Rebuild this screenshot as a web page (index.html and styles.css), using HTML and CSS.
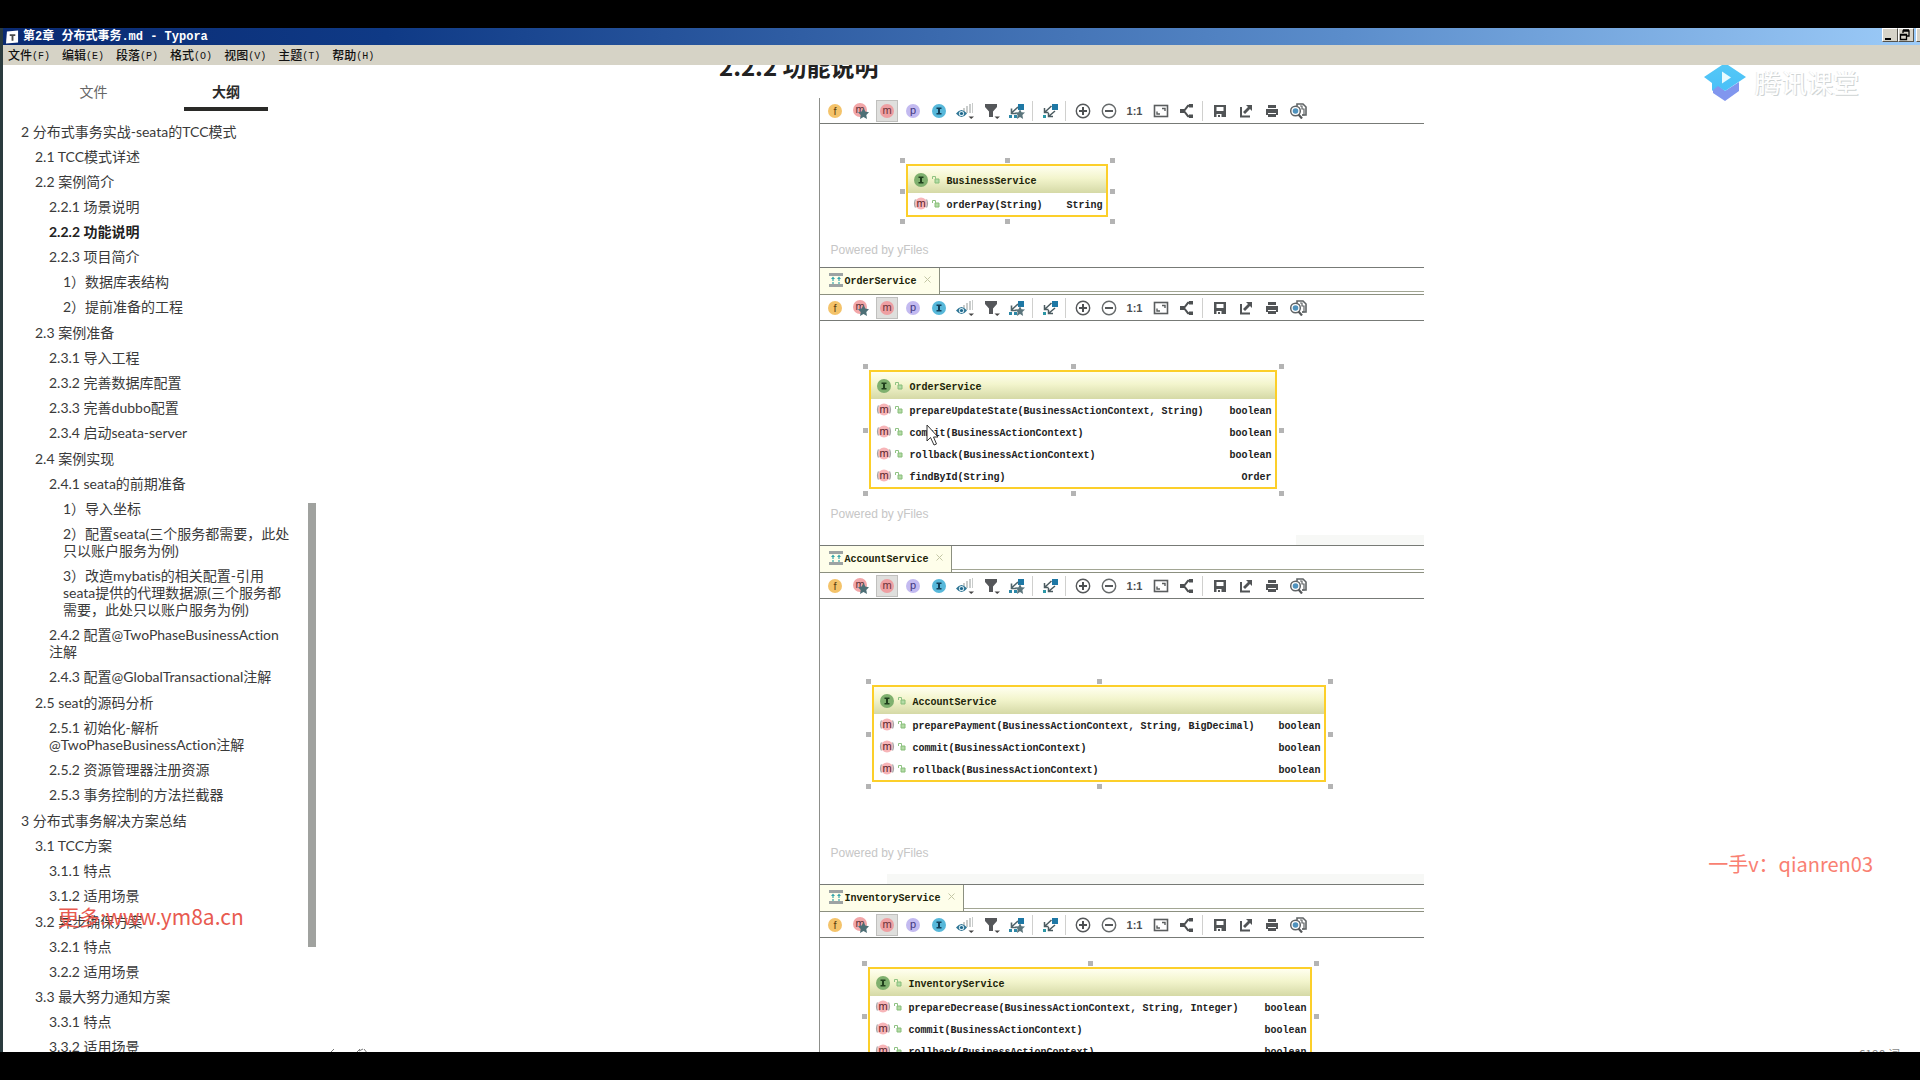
FILE: index.html
```html
<!DOCTYPE html>
<html lang="zh-CN">
<head>
<meta charset="utf-8">
<title>第2章 分布式事务.md - Typora</title>
<link rel="stylesheet" href="styles.css">
<script src="diagrams.js" defer></script>
</head>
<body>
<svg class="defs" aria-hidden="true">
  <defs>
    <linearGradient id="hat" x1="0" y1="0" x2="0" y2="1"><stop offset="0" stop-color="#55c8f6"/><stop offset="1" stop-color="#4ac0f8"/></linearGradient>
  </defs>
  <symbol id="i-field" viewBox="0 0 16 16"><circle cx="8" cy="8" r="7" fill="#f4c36a"/><text x="8" y="12" text-anchor="middle" class="glyph" fill="#5e4210">f</text></symbol>
  <symbol id="i-ctor" viewBox="0 0 16 16"><circle cx="7" cy="7" r="7" fill="#f2a6a8"/><text x="7" y="10" text-anchor="middle" class="glyph" fill="#5b2f35">m</text><path d="M10.500 5l1.800 3.600 3.700.6-2.700 2.700.7 4.100-3.500-1.900L7 16l.7-4.100L5 9.200l3.700-.6z" fill="#4d6f76"/></symbol>
  <symbol id="i-method" viewBox="0 0 16 16"><circle cx="8" cy="8" r="7" fill="#ee9fa2"/><text x="8" y="11" text-anchor="middle" class="glyph" fill="#6b3239">m</text></symbol>
  <symbol id="i-prop" viewBox="0 0 16 16"><circle cx="8" cy="8" r="7" fill="#c3baf0"/><text x="8" y="11" text-anchor="middle" class="glyph" fill="#42367e">p</text></symbol>
  <symbol id="i-inner" viewBox="0 0 16 16"><circle cx="8" cy="8" r="7" fill="#57b8da"/><path d="M5.500 4.500h5v1.500H9v4h1.500v1.500h-5V10H7V6H5.500z" fill="#123f58"/></symbol>
  <symbol id="i-eye" viewBox="0 0 18 16"><path d="M7 5h2v3H7zM10 3h2v7h-2zM13 1h2v9h-2zM16 0h1v10h-1z" fill="#c9cccb"/><path d="M0 10.500Q5.500 3.500 11 10.500Q5.500 17.500 0 10.500z" fill="#2f7595"/><circle cx="5.500" cy="10.500" r="2.600" fill="#d9edf4"/><circle cx="5.500" cy="10.500" r="1.600" fill="#1d668c"/><path d="M12.500 13.500H18L15.200 16z" fill="#444"/></symbol>
  <symbol id="i-filter" viewBox="0 0 18 16"><path d="M3 1h12v3l-4 4.500V14H7V8.500L3 4z" fill="#55575a"/><path d="M12.500 13.500H18L15.200 16z" fill="#444"/></symbol>
  <symbol id="i-deps" viewBox="0 0 16 16"><path d="M9 1h6v6H9z" fill="#1e78a5"/><path d="M0 12h3v3H0zM5 12h3v3H5z" fill="#2c87a6"/><path d="M9 4L3 9.500M2.500 5.500v5h5" fill="none" stroke="#51646a" stroke-width="1.600"/><path d="M11 6l1.500 3.200 3.500.4-2.600 2.400.7 4-3.100-1.900L7.900 16l.7-4L6 9.600l3.500-.4z" fill="#5b757c"/></symbol>
  <symbol id="i-link" viewBox="0 0 16 16"><path d="M10 1h6v6h-6z" fill="#1e78a5"/><path d="M1 12h3v3H1z" fill="#2c97a6"/><path d="M9.500 3L3 9M2.500 5v4.500h4M13 8l-6.500 5.500M11 13.500H6.500V10" fill="none" stroke="#4b5b60" stroke-width="1.500"/></symbol>
  <symbol id="i-plus" viewBox="0 0 16 16"><circle cx="8" cy="8" r="6.700" fill="none" stroke="#55585a" stroke-width="1.400"/><path d="M4 8h8M8 4v8" stroke="#4d5052" stroke-width="2"/></symbol>
  <symbol id="i-minus" viewBox="0 0 16 16"><circle cx="8" cy="8" r="6.700" fill="none" stroke="#666a6b" stroke-width="1.400"/><path d="M4 8h8" stroke="#55585a" stroke-width="2"/></symbol>
  <symbol id="i-fit" viewBox="0 0 16 16"><rect x="1.500" y="2.500" width="13" height="11" fill="none" stroke="#5a5d5e" stroke-width="1.600"/><path d="M9 5.500h3V8M4 8.500V11h3" fill="none" stroke="#5a5d5e" stroke-width="1.400"/></symbol>
  <symbol id="i-layout" viewBox="0 0 16 16"><path d="M1 6h5v4H1zM10 1h4v3.500h-4zM10 11.500h4V15h-4z" fill="#4d5052"/><path d="M11 2.800H9L5 8l4 5.200h2" fill="none" stroke="#4d5052" stroke-width="2"/></symbol>
  <symbol id="i-save" viewBox="0 0 16 16"><path d="M2 2h12v12H2z" fill="#515456"/><path d="M4.500 4h7v4h-7z" fill="#fff"/><path d="M4.500 11h5v3h-5z" fill="#fff"/><path d="M6 12h2v2H6z" fill="#515456"/></symbol>
  <symbol id="i-export" viewBox="0 0 16 16"><path d="M8 2h6v6l-2-2-5 5-2-2 5-5z" fill="#515456"/><path d="M3 4v9.500h9" fill="none" stroke="#515456" stroke-width="2"/></symbol>
  <symbol id="i-print" viewBox="0 0 16 16"><path d="M4 2h8v3H4zM2 6h12v6h-2v-2H4v2H2zM4 11h8v3H4z" fill="#515456"/></symbol>
  <symbol id="i-preview" viewBox="0 0 18 16"><path d="M8 3V1h6l3 3v8h-4" fill="none" stroke="#606466" stroke-width="1.600"/><path d="M11 3h2v3h2v6h-2" fill="none" stroke="#606466" stroke-width="1.200"/><circle cx="6.500" cy="8" r="4.800" fill="#fff" stroke="#606466" stroke-width="1.500"/><circle cx="6.500" cy="8" r="2.800" fill="#4f92bd"/><path d="M9.500 11.500l3.500 4" stroke="#55585a" stroke-width="2.200"/></symbol>
  <symbol id="i-iface" viewBox="0 0 16 16"><circle cx="8" cy="8" r="7" fill="#7fb06e"/><path d="M5.500 4.500h5V6H9v4h1.500v1.500h-5V10H7V6H5.500z" fill="#20401c"/></symbol>
  <symbol id="i-abs" viewBox="0 0 16 16"><circle cx="8" cy="7.500" r="6" fill="#f7b5b8"/><path d="M2.500 3.500Q.5 7.500 2.500 11.500M13.500 3.500Q15.500 7.500 13.500 11.500" fill="none" stroke="#a5a5a5" stroke-width="1.200"/><text x="8" y="11" text-anchor="middle" class="glyph" fill="#5a2228">m</text></symbol>
  <symbol id="i-lock" viewBox="0 0 10 10"><path d="M4 4h4v4H4z" fill="#b4dba6" stroke="#86bd79"/><path d="M1.500 4V1.500h3V4" fill="none" stroke="#8fc283"/></symbol>
  <symbol id="i-diagram" viewBox="0 0 14 14"><path d="M0 0h14v3H0zM0 11h14v3H0z" fill="#9da3a3"/><path d="M4 11V5M10 11V5" stroke="#35a5ab" stroke-width="1.200" stroke-dasharray="2 1"/><path d="M2 6l2-2.500L6 6zM8 6l2-2.500L12 6z" fill="#35a5ab"/></symbol>
</svg>

<template id="toolbar-template">
  <div class="toolbar" role="toolbar" aria-label="图表工具">
    <button class="tool" type="button" aria-label="Fields"><svg class="ico"><use href="#i-field"/></svg></button>
    <button class="tool" type="button" aria-label="Constructors"><svg class="ico"><use href="#i-ctor"/></svg></button>
    <button class="tool tool-on" type="button" aria-label="Methods" aria-pressed="true"><svg class="ico"><use href="#i-method"/></svg></button>
    <button class="tool" type="button" aria-label="Properties"><svg class="ico"><use href="#i-prop"/></svg></button>
    <button class="tool" type="button" aria-label="Inner classes"><svg class="ico"><use href="#i-inner"/></svg></button>
    <button class="tool" type="button" aria-label="Visibility"><svg class="ico ico-wide"><use href="#i-eye"/></svg></button>
    <button class="tool" type="button" aria-label="Filter"><svg class="ico ico-wide"><use href="#i-filter"/></svg></button>
    <button class="tool" type="button" aria-label="Dependencies"><svg class="ico"><use href="#i-deps"/></svg></button>
    <span class="sep"></span>
    <button class="tool" type="button" aria-label="Edges"><svg class="ico"><use href="#i-link"/></svg></button>
    <span class="sep"></span>
    <button class="tool" type="button" aria-label="Zoom in"><svg class="ico"><use href="#i-plus"/></svg></button>
    <button class="tool" type="button" aria-label="Zoom out"><svg class="ico"><use href="#i-minus"/></svg></button>
    <button class="tool tool-text" type="button">1:1</button>
    <button class="tool" type="button" aria-label="Fit content"><svg class="ico"><use href="#i-fit"/></svg></button>
    <button class="tool" type="button" aria-label="Layout"><svg class="ico"><use href="#i-layout"/></svg></button>
    <span class="sep"></span>
    <button class="tool" type="button" aria-label="Save"><svg class="ico"><use href="#i-save"/></svg></button>
    <button class="tool" type="button" aria-label="Export"><svg class="ico"><use href="#i-export"/></svg></button>
    <button class="tool" type="button" aria-label="Print"><svg class="ico"><use href="#i-print"/></svg></button>
    <button class="tool" type="button" aria-label="Print preview"><svg class="ico ico-wide"><use href="#i-preview"/></svg></button>
  </div>
</template>

<div class="window">
  <header class="titlebar">
    <svg class="app-icon" viewBox="0 0 14 14"><path d="M1 1l12-1v13l-13 1z" fill="#fff"/><path d="M4 4h6v2H8v5H6V6H4z" fill="#4a4a4a"/></svg>
    <span class="title">第2章 分布式事务.md - Typora</span>
    <div class="win-buttons">
      <button class="win-btn" type="button" aria-label="最小化"><svg viewBox="0 0 12 12"><path d="M2 9h6v2H2z" fill="#000"/></svg></button>
      <button class="win-btn" type="button" aria-label="还原"><svg viewBox="0 0 12 12"><path d="M4 4V2h6v5H8M4 1h6M1.500 5.500h6v5h-6zM1.500 6h6" fill="none" stroke="#000" stroke-width="1.300"/></svg></button>
      <button class="win-btn win-close" type="button" aria-label="关闭"></button>
    </div>
  </header>
  <nav class="menubar">
    <button type="button">文件<span>(F)</span></button>
    <button type="button">编辑<span>(E)</span></button>
    <button type="button">段落<span>(P)</span></button>
    <button type="button">格式<span>(O)</span></button>
    <button type="button">视图<span>(V)</span></button>
    <button type="button">主题<span>(T)</span></button>
    <button type="button">帮助<span>(H)</span></button>
  </nav>

  <div class="workspace">
    <aside class="sidebar">
      <div class="tabs" role="tablist">
        <button class="tab" type="button" role="tab">文件</button>
        <button class="tab tab-active" type="button" role="tab" aria-selected="true">大纲</button>
      </div>
      <ul class="outline">
        <li><a href="#">2 分布式事务实战-seata的TCC模式</a>
          <ul>
            <li><a href="#">2.1 TCC模式详述</a></li>
            <li><a href="#">2.2 案例简介</a>
              <ul class="sections">
                <li><a href="#">2.2.1 场景说明</a></li>
                <li><a class="current" href="#">2.2.2 功能说明</a></li>
                <li><a href="#">2.2.3 项目简介</a>
                  <ul>
                    <li><a href="#">1）数据库表结构</a></li>
                    <li><a href="#">2）提前准备的工程</a></li>
                  </ul></li>
              </ul></li>
            <li><a href="#">2.3 案例准备</a>
              <ul class="sections">
                <li><a href="#">2.3.1 导入工程</a></li>
                <li><a href="#">2.3.2 完善数据库配置</a></li>
                <li><a href="#">2.3.3 完善dubbo配置</a></li>
                <li><a href="#">2.3.4 启动seata-server</a></li>
              </ul></li>
            <li><a href="#">2.4 案例实现</a>
              <ul class="sections">
                <li><a href="#">2.4.1 seata的前期准备</a>
                  <ul>
                    <li><a href="#">1）导入坐标</a></li>
                    <li><a href="#">2）配置seata(三个服务都需要，此处只以账户服务为例)</a></li>
                    <li><a href="#">3）改造mybatis的相关配置-引用seata提供的代理数据源(三个服务都需要，此处只以账户服务为例)</a></li>
                  </ul></li>
                <li><a href="#">2.4.2 配置@TwoPhaseBusinessAction注解</a></li>
                <li><a href="#">2.4.3 配置@GlobalTransactional注解</a></li>
              </ul></li>
            <li><a href="#">2.5 seat的源码分析</a>
              <ul class="sections">
                <li><a href="#">2.5.1 初始化-解析@TwoPhaseBusinessAction注解</a></li>
                <li><a href="#">2.5.2 资源管理器注册资源</a></li>
                <li><a href="#">2.5.3 事务控制的方法拦截器</a></li>
              </ul></li>
          </ul></li>
        <li><a href="#">3 分布式事务解决方案总结</a>
          <ul>
            <li><a href="#">3.1 TCC方案</a>
              <ul class="sections">
                <li><a href="#">3.1.1 特点</a></li>
                <li><a href="#">3.1.2 适用场景</a></li>
              </ul></li>
            <li><a href="#">3.2 异步确保方案</a>
              <ul>
                <li><a href="#">3.2.1 特点</a></li>
                <li><a href="#">3.2.2 适用场景</a></li>
              </ul></li>
            <li><a href="#">3.3 最大努力通知方案</a>
              <ul>
                <li><a href="#">3.3.1 特点</a></li>
                <li><a href="#">3.3.2 适用场景</a></li>
              </ul></li>
          </ul></li>
      </ul>
      <div class="scroll-thumb"></div>
      <div class="promo promo-left">更多:www.ym8a.cn</div>
    </aside>

    <main class="content">
      <article class="document">
        <h4>2.2.2 功能说明</h4>
        <div class="diagrams">
          <section class="panel">
            <div class="canvas canvas-business">
              <div class="node node-business">
                <div class="node-head"><svg class="ico"><use href="#i-iface"/></svg><svg class="lock"><use href="#i-lock"/></svg><span>BusinessService</span></div>
                <div class="row"><svg class="ico"><use href="#i-abs"/></svg><svg class="lock"><use href="#i-lock"/></svg><span>orderPay(String)</span><span class="type">String</span></div>
              </div>
              <p class="credit">Powered by yFiles</p>
            </div>
          </section>

          <section class="panel">
            <div class="file-tabs"><div class="file-tab"><svg class="tab-ico"><use href="#i-diagram"/></svg><span>OrderService</span><button class="close" type="button" aria-label="关闭"><svg viewBox="0 0 7 7"><path d="M.5.5l6 6M6.500.5l-6 6" stroke="#c3c6a4"/></svg></button></div></div>
            <div class="canvas canvas-order">
              <div class="node node-order">
                <div class="node-head"><svg class="ico"><use href="#i-iface"/></svg><svg class="lock"><use href="#i-lock"/></svg><span>OrderService</span></div>
                <div class="row"><svg class="ico"><use href="#i-abs"/></svg><svg class="lock"><use href="#i-lock"/></svg><span>prepareUpdateState(BusinessActionContext, String)</span><span class="type">boolean</span></div>
                <div class="row"><svg class="ico"><use href="#i-abs"/></svg><svg class="lock"><use href="#i-lock"/></svg><span>commit(BusinessActionContext)</span><span class="type">boolean</span></div>
                <div class="row"><svg class="ico"><use href="#i-abs"/></svg><svg class="lock"><use href="#i-lock"/></svg><span>rollback(BusinessActionContext)</span><span class="type">boolean</span></div>
                <div class="row"><svg class="ico"><use href="#i-abs"/></svg><svg class="lock"><use href="#i-lock"/></svg><span>findById(String)</span><span class="type">Order</span></div>
                <svg class="pointer" viewBox="0 0 13 22"><path d="M1 1v16l3.500-3.500L8 21l2.500-1L7.500 13H12z" fill="#fff" stroke="#333"/></svg>
              </div>
              <p class="credit">Powered by yFiles</p>
              <div class="shade shade-order"></div>
            </div>
          </section>

          <section class="panel">
            <div class="file-tabs"><div class="file-tab"><svg class="tab-ico"><use href="#i-diagram"/></svg><span>AccountService</span><button class="close" type="button" aria-label="关闭"><svg viewBox="0 0 7 7"><path d="M.5.5l6 6M6.500.5l-6 6" stroke="#c3c6a4"/></svg></button></div></div>
            <div class="canvas canvas-account">
              <div class="node node-account">
                <div class="node-head"><svg class="ico"><use href="#i-iface"/></svg><svg class="lock"><use href="#i-lock"/></svg><span>AccountService</span></div>
                <div class="row"><svg class="ico"><use href="#i-abs"/></svg><svg class="lock"><use href="#i-lock"/></svg><span>preparePayment(BusinessActionContext, String, BigDecimal)</span><span class="type">boolean</span></div>
                <div class="row"><svg class="ico"><use href="#i-abs"/></svg><svg class="lock"><use href="#i-lock"/></svg><span>commit(BusinessActionContext)</span><span class="type">boolean</span></div>
                <div class="row"><svg class="ico"><use href="#i-abs"/></svg><svg class="lock"><use href="#i-lock"/></svg><span>rollback(BusinessActionContext)</span><span class="type">boolean</span></div>
              </div>
              <p class="credit">Powered by yFiles</p>
              <div class="shade shade-account"></div>
            </div>
          </section>

          <section class="panel">
            <div class="file-tabs"><div class="file-tab"><svg class="tab-ico"><use href="#i-diagram"/></svg><span>InventoryService</span><button class="close" type="button" aria-label="关闭"><svg viewBox="0 0 7 7"><path d="M.5.5l6 6M6.500.5l-6 6" stroke="#c3c6a4"/></svg></button></div></div>
            <div class="canvas canvas-inventory">
              <div class="node node-inventory">
                <div class="node-head"><svg class="ico"><use href="#i-iface"/></svg><svg class="lock"><use href="#i-lock"/></svg><span>InventoryService</span></div>
                <div class="row"><svg class="ico"><use href="#i-abs"/></svg><svg class="lock"><use href="#i-lock"/></svg><span>prepareDecrease(BusinessActionContext, String, Integer)</span><span class="type">boolean</span></div>
                <div class="row"><svg class="ico"><use href="#i-abs"/></svg><svg class="lock"><use href="#i-lock"/></svg><span>commit(BusinessActionContext)</span><span class="type">boolean</span></div>
                <div class="row"><svg class="ico"><use href="#i-abs"/></svg><svg class="lock"><use href="#i-lock"/></svg><span>rollback(BusinessActionContext)</span><span class="type">boolean</span></div>
              </div>
            </div>
          </section>
        </div>
      </article>

      <div class="brand">
        <svg viewBox="0 0 44 38"><path d="M10 24l5-2 7 6 14-9v9L22 38 10 30z" fill="#8196ee"/><path d="M22 0l21 14-21 14-7-5-6 5v-8L1 14z" fill="url(#hat)"/><path d="M19 8.500l9 6-9 6z" fill="#e8fbff"/></svg>
        <span>腾讯课堂</span>
      </div>
      <div class="promo promo-right">一手v：qianren03</div>
      <footer class="statusbar">
        <button type="button" aria-label="侧边栏"><svg viewBox="0 0 40 12"><path d="M6 1L2 5l4 4M28 5l4-4M31 3l4-2M36 1l4 5" fill="none" stroke="#777"/></svg></button>
        <span>6190 词</span>
      </footer>
    </main>
  </div>
</div>
</body>
</html>
```
FILE: styles.css
```css
* { box-sizing: border-box; }

body {
  margin: 0;
  height: 100vh;
  padding: 28px 0;
  background: #000;
  overflow: hidden;
  font-family: "Noto Sans CJK SC", sans-serif;
  font-size: 14px;
  color: #333;
}

button {
  margin: 0;
  padding: 0;
  border: 0;
  background: none;
  font: inherit;
  color: inherit;
}

a { color: inherit; text-decoration: none; }
ul { list-style: none; margin: 0; padding: 0; }
svg { display: block; flex: none; }
.defs { position: absolute; width: 0; height: 0; }

.glyph { font: 11px "Liberation Sans", sans-serif; }

.window {
  height: 100%;
  display: flex;
  flex-direction: column;
  overflow: hidden;
  border-left: 3px solid #2a3b3e;
  background: #fff;
}

/* Title bar and menus */
.titlebar {
  flex: none;
  height: 17px;
  display: flex;
  align-items: center;
  padding-left: 3px;
  gap: 4px;
  background: linear-gradient(90deg, #0a2a72, #0f3a86 20%, #5b8dcb 70%, #9ccbf8);
}
.app-icon { width: 13px; height: 14px; }
.title {
  flex: 1;
  padding-top: 1px;
  color: #fff;
  font: bold 12px/16px "Liberation Mono", "Noto Sans CJK SC", monospace;
}
.win-buttons { display: flex; height: 14px; align-self: flex-start; }
.win-btn {
  width: 16px;
  height: 14px;
  background: #d6d3c8;
  border: 1px solid;
  border-color: #fff #55534c #55534c #fff;
}
.win-btn svg { width: 12px; height: 12px; }
.win-close { width: 4px; margin-left: 2px; border-right: 0; }

.menubar {
  flex: none;
  height: 20px;
  display: flex;
  gap: 12px;
  padding-left: 5px;
  background: #d6d3c6;
}
.menubar button {
  font-size: 12px;
  line-height: 20px;
  font-weight: 500;
  color: #111;
}
.menubar span { font: 10px "Liberation Mono", monospace; vertical-align: 1px; }

.workspace { flex: 1; min-height: 0; display: flex; }

/* Outline sidebar */
.sidebar {
  position: relative;
  flex: none;
  width: 319px;
  padding: 0 30px 0 18px;
  overflow: hidden;
}
.tabs {
  display: flex;
  margin: 0 0 8px 6px;
  height: 46px;
}
.tab { flex: 1; display: flex; justify-content: center; padding: 15px 0 0; line-height: 22px; color: #666; }
.tab-active {
  flex: none;
  width: 84px;
  margin: 0 24px;
  color: #2b2b2b;
  font-weight: 700;
  border-bottom: 4px solid #2a2a28;
}
.outline { font-family: Lato, "Noto Sans CJK SC", sans-serif; font-variant-ligatures: none; }
.outline ul { padding-left: 14px; }
.outline .sections { padding-bottom: 1px; }
.outline a { display: block; padding: 4px 0; line-height: 17px; color: #3a3a3a; }
.outline .current { font-weight: 700; color: #222; }
.scroll-thumb {
  position: absolute;
  top: 438px;
  left: 305px;
  width: 8px;
  height: 444px;
  background: #a0a29f;
}

/* Document */
.content {
  position: relative;
  flex: 1;
  overflow: hidden;
}
.document {
  max-width: 804px;
  margin: 0 auto;
}
.document h4 {
  margin: -16px 0 15px;
  font-size: 24px;
  line-height: 34px;
  color: #222;
}
.diagrams {
  width: 605px;
  margin: 0 auto;
  border-left: 1px solid #8d8f8b;
  font: bold 10px/12px "Liberation Mono", monospace;
  color: #222;
}

.file-tabs {
  height: 28px;
  border-top: 1px solid #777a76;
  border-bottom: 1px solid #8c9080;
  display: flex;
}
.file-tabs::after {
  content: "";
  flex: 1;
  height: 23px;
  border-bottom: 1px solid #a2a694;
}
.file-tab {
  display: flex;
  align-items: center;
  padding: 0 8px 3px 9px;
  background: #fefeea;
  border-right: 1px solid #8c9080;
  color: #1c2408;
}
.file-tab span { padding-top: 4px; }
.tab-ico { width: 14px; height: 14px; margin-right: 2px; }
.close { margin-left: 7px; }
.close svg { width: 7px; height: 7px; }

.toolbar {
  height: 26px;
  display: flex;
  align-items: center;
  gap: 4px;
  padding-left: 4px;
  border-bottom: 1px solid #777a76;
}
.tool { width: 22px; height: 22px; display: flex; align-items: center; justify-content: center; }
.tool-on { background: #dfdfdd; border: 1px solid #c0c0be; }
.tool-text { font: bold 11px "Liberation Sans", sans-serif; color: #4d5052; }
.ico { width: 16px; height: 16px; }
.ico-wide { width: 18px; }
.sep { width: 3px; height: 20px; border-left: 1px solid #d0d0ce; }

/* Diagram canvases: nodes are freely placed */
.canvas { position: relative; }
.canvas-business { height: 143px; }
.canvas-order { height: 224px; }
.canvas-account { height: 285px; }
.canvas-inventory { height: 160px; }

.node {
  position: absolute;
  border: 2px solid #fccf2a;
  background: #fff;
}
.node-business { left: 86px; top: 40px; width: 202px; }
.node-order { left: 49px; top: 49px; width: 408px; }
.node-account { left: 52px; top: 86px; width: 454px; }
.node-inventory { left: 48px; top: 29px; width: 444px; }
.handle { position: absolute; width: 5px; height: 5px; background: #b4b4b4; }
.h-l { left: -8px; }
.h-c { left: calc(50% - 2px); }
.h-r { right: -9px; }
.h-t { top: -8px; }
.h-m { top: calc(50% - 2px); }
.h-b { bottom: -9px; }

.node-head, .row { display: flex; align-items: center; padding: 0 3px 0 5px; }
.node-head {
  height: 27px;
  background: linear-gradient(#ffffef, #f3f5cd 45%, #d5d9a6);
  color: #1c2408;
}
.row { height: 22px; }
.node span { padding-top: 4px; }
.lock { width: 10px; height: 10px; margin: 0 6px 0 2px; }
.type { margin-left: auto; }
.pointer { position: absolute; left: 55px; top: 52px; width: 13px; height: 22px; }

.credit {
  position: absolute;
  left: 11px;
  bottom: 24px;
  margin: 0;
  font: 12px/14px "Liberation Sans", sans-serif;
  color: #c6c6c6;
}
.canvas-business .credit { bottom: 10px; }
.shade { position: absolute; right: 0; bottom: 0; height: 10px; background: #f7f8f6; }
.shade-order { width: 128px; }
.shade-account { width: 537px; }

/* Overlays */
.brand {
  position: absolute;
  top: -2px;
  right: 61px;
  display: flex;
  align-items: center;
  gap: 8px;
  color: #fff;
  font-size: 26px;
  line-height: 38px;
  text-shadow: 1px 1px 0 #cfd4d4, -1px 0 0 #eceeee;
}
.brand svg { width: 44px; height: 38px; }
.promo { position: absolute; white-space: nowrap; }
.promo-left { left: 55px; top: 835px; font-size: 21px; line-height: 32px; color: #e85a4f; }
.promo-right { right: 47px; top: 784px; font-size: 20px; line-height: 30px; color: #f98072; }

.statusbar {
  position: absolute;
  left: 0;
  right: 0;
  bottom: -12px;
  height: 20px;
  display: flex;
  justify-content: space-between;
  padding: 0 20px 0 6px;
  font-size: 12px;
  line-height: 20px;
  color: #888;
}
.statusbar svg { width: 40px; height: 12px; }
```
FILE: diagrams.js
```js
const toolbar = document.getElementById("toolbar-template");

document.querySelectorAll(".canvas").forEach((canvas) => {
  canvas.before(toolbar.content.cloneNode(true));
});

// Selection handles: corners and edge midpoints of every node
const spots = ["l t", "c t", "r t", "l m", "r m", "l b", "c b", "r b"];
document.querySelectorAll(".node").forEach((node) => {
  for (const spot of spots) {
    const [x, y] = spot.split(" ");
    const handle = document.createElement("i");
    handle.className = `handle h-${x} h-${y}`;
    node.append(handle);
  }
});
```
